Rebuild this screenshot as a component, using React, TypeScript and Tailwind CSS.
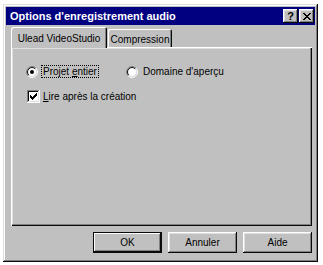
import React from "react";

const font = { fontFamily: '"Liberation Sans", Arial, sans-serif' };

function Radio({ checked }: { checked?: boolean }) {
  const c = 6;
  const k = 0.7071;
  const arc = (r: number, tl: boolean) =>
    tl
      ? `M ${c - r * k} ${c + r * k} A ${r} ${r} 0 0 1 ${c + r * k} ${c - r * k}`
      : `M ${c + r * k} ${c - r * k} A ${r} ${r} 0 0 1 ${c - r * k} ${c + r * k}`;
  return (
    <svg width="12" height="12" viewBox="0 0 12 12" className="shrink-0">
      <circle cx={c} cy={c} r={4.5} fill="#ffffff" />
      <path d={arc(5.5, true)} stroke="#808080" strokeWidth="1" fill="none" />
      <path d={arc(5.5, false)} stroke="#ffffff" strokeWidth="1" fill="none" />
      <path d={arc(4.5, true)} stroke="#0a0a0a" strokeWidth="1" fill="none" />
      <path d={arc(4.5, false)} stroke="#dfdfdf" strokeWidth="1" fill="none" />
      {checked && <circle cx={c} cy={c} r={2} fill="#000" />}
    </svg>
  );
}

function Checkbox() {
  const pts = [
    [6, 0], [5, 1], [6, 1], [0, 2], [4, 2], [5, 2], [6, 2],
    [0, 3], [1, 3], [3, 3], [4, 3], [5, 3],
    [0, 4], [1, 4], [2, 4], [3, 4], [4, 4],
    [1, 5], [2, 5], [3, 5], [2, 6],
  ];
  return (
    <svg width="13" height="13" viewBox="0 0 13 13" className="shrink-0" shapeRendering="crispEdges">
      <rect x="0" y="0" width="13" height="13" fill="#ffffff" />
      <rect x="0" y="0" width="12" height="1" fill="#808080" />
      <rect x="0" y="0" width="1" height="12" fill="#808080" />
      <rect x="1" y="1" width="10" height="1" fill="#0a0a0a" />
      <rect x="1" y="1" width="1" height="10" fill="#0a0a0a" />
      <rect x="1" y="11" width="11" height="1" fill="#dfdfdf" />
      <rect x="11" y="1" width="1" height="11" fill="#dfdfdf" />
      {pts.map(([x, y], i) => (
        <rect key={i} x={x + 3} y={y + 3} width="1" height="1" fill="#000" />
      ))}
    </svg>
  );
}

function CapButton({ children }: { children: React.ReactNode }) {
  return (
    <div className="w-[15px] h-[14px] bg-[#c0c0c0] flex items-center justify-center shadow-[inset_-1px_-1px_#0a0a0a,inset_1px_1px_#ffffff,inset_-2px_-2px_#808080,inset_2px_2px_#dfdfdf]">
      {children}
    </div>
  );
}

function Button({ label, def }: { label: string; def?: boolean }) {
  return (
    <div
      className={
        "w-[69px] h-[21px] bg-[#c0c0c0] flex items-center justify-center text-[10px] text-black " +
        (def
          ? "shadow-[inset_0_0_0_1px_#0a0a0a,inset_-2px_-2px_#0a0a0a,inset_2px_2px_#ffffff,inset_-3px_-3px_#808080]"
          : "shadow-[inset_-1px_-1px_#0a0a0a,inset_1px_1px_#ffffff,inset_-2px_-2px_#808080,inset_2px_2px_#dfdfdf]")
      }
    >
      {label}
    </div>
  );
}

export default function App() {
  return (
    <div className="w-[323px] h-[265px] bg-white pt-[4px] pl-[3px]" style={font}>
      <div className="w-[315px] h-[258px] bg-[#c0c0c0] p-[3px] flex flex-col shadow-[inset_-1px_-1px_#0a0a0a,inset_1px_1px_#dfdfdf,inset_-2px_-2px_#808080,inset_2px_2px_#ffffff]">
        <div className="h-[18px] bg-[#000080] flex items-center pl-[4px] pr-[1px]">
          <span className="text-white font-bold text-[11px] leading-none">
            Options d'enregistrement audio
          </span>
          <div className="ml-auto flex gap-[1px]">
            <CapButton>
              <span className="text-black font-bold text-[11px] leading-none">?</span>
            </CapButton>
            <CapButton>
              <svg width="8" height="7" viewBox="0 0 8 7" shapeRendering="crispEdges">
                <path d="M0 0h2v1h-2zM6 0h2v1h-2zM1 1h2v1h-2zM5 1h2v1h-2zM2 2h4v1h-4zM3 3h2v1h-2zM2 4h4v1h-4zM1 5h2v1h-2zM5 5h2v1h-2zM0 6h2v1h-2zM6 6h2v1h-2z" fill="#000" />
              </svg>
            </CapButton>
          </div>
        </div>

        <div className="flex flex-col pl-[5px] pr-[3px] pt-[2px]">
          <div className="flex items-end h-[20px] relative z-10">
            <div className="w-[96px] h-[21px] mb-[-1px] bg-[#c0c0c0] rounded-t-[2px] flex items-start justify-center pt-[4px] text-[10px] text-black shadow-[inset_1px_1px_#ffffff,inset_-1px_0_#0a0a0a,inset_-2px_0_#808080]">
              Ulead VideoStudio
            </div>
            <div className="w-[64px] h-[18px] ml-[1px] bg-[#c0c0c0] rounded-t-[2px] flex items-start justify-center pt-[3px] text-[10px] text-black shadow-[inset_1px_1px_#ffffff,inset_-1px_0_#0a0a0a,inset_-2px_0_#808080]">
              Compression
            </div>
          </div>
          <div className="h-[179px] bg-[#c0c0c0] shadow-[inset_1px_1px_#ffffff,inset_-1px_-1px_#0a0a0a,inset_-2px_-2px_#808080,inset_2px_2px_#dfdfdf] pt-[18px] pl-[15px] text-[10px] text-black">
            <div className="flex items-center h-[13px]">
              <div className="w-[100px] flex items-center gap-[3px]">
                <Radio checked />
                <span className="border border-dotted border-black px-[1px] leading-[11px]">
                  Projet <span className="underline">e</span>ntier
                </span>
              </div>
              <div className="flex items-center gap-[5px]">
                <Radio />
                <span>Domaine d'aperçu</span>
              </div>
            </div>
            <div className="flex items-center gap-[3px] mt-[11px] ml-[1px]">
              <Checkbox />
              <span>
                <span className="underline">L</span>ire après la création
              </span>
            </div>
          </div>
          <div className="flex justify-end gap-[6px] mt-[6px]">
            <Button label="OK" def />
            <Button label="Annuler" />
            <Button label="Aide" />
          </div>
        </div>
      </div>
    </div>
  );
}
